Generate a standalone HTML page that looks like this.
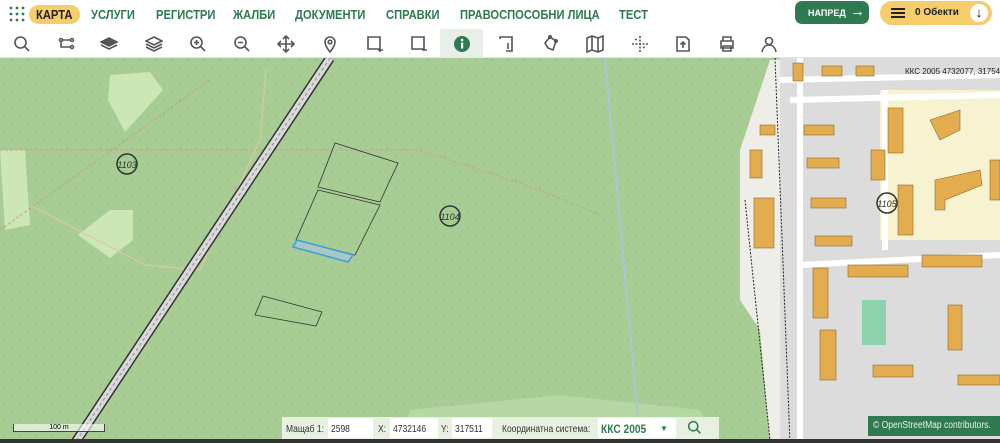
<!DOCTYPE html>
<html><head><meta charset="utf-8"><style>
*{margin:0;padding:0;box-sizing:border-box}
body{width:1000px;height:443px;overflow:hidden;font-family:"Liberation Sans",sans-serif;background:#a7cc94;position:relative}
.nav{position:absolute;left:0;top:0;width:1000px;height:29px;background:#fff}
.nav span{position:absolute;top:7px;font-weight:bold;font-size:13px;color:#2f7a50;white-space:nowrap;transform:scaleX(.86);transform-origin:left}
.tb{position:absolute;left:0;top:29px;width:1000px;height:29px;background:#fff;border-bottom:1px solid #e3e3e3}
.tb svg{position:absolute;top:6px;width:18px;height:18px;fill:none;stroke:#555;stroke-width:1.6}
.map{position:absolute;left:0;top:58px}
.bar{position:absolute;top:417px;height:22px;background:#e8f1e1;font-size:10px;color:#333}
.t{position:absolute;top:424px;font-size:10px;color:#333;white-space:nowrap;transform:scaleX(.85);transform-origin:left}
.f{position:absolute;top:418px;height:20px;background:#fff}
</style></head><body>
<svg class="map" width="1000" height="385" viewBox="0 58 1000 385">
<defs><pattern id="d" width="16" height="16" patternUnits="userSpaceOnUse"><circle cx="4" cy="4" r="0.9" fill="#95bd85"/><circle cx="12" cy="12" r="0.9" fill="#95bd85"/></pattern></defs>
<rect x="0" y="58" width="1000" height="385" fill="#a7cc94"/>
<rect x="0" y="58" width="1000" height="385" fill="url(#d)"/>
<path d="M110 75 L150 72 L163 90 L125 132 L108 100Z" fill="#cde6b6"/>
<path d="M0 150 L25 150 L30 225 L5 230Z" fill="#cde6b6"/>
<path d="M78 235 L110 210 L133 210 L133 240 L110 258Z" fill="#cde6b6"/>
<path d="M410 410 L560 395 L700 410 L720 443 L400 443Z" fill="#b7d8a5"/>
<path d="M0 150 L420 150 L540 190 L600 215" stroke="#c4a27f" stroke-width="1" stroke-dasharray="3 2" fill="none"/>
<path d="M0 230 L210 80" stroke="#c4a27f" stroke-width="1" stroke-dasharray="3 2" fill="none"/>
<path d="M266 70 L260 140 L200 270 L145 265 L30 205" stroke="#d7cba0" stroke-width="1.2" fill="none"/>
<path d="M330 58 L75 443" stroke="#333" stroke-width="10" fill="none"/>
<path d="M330 58 L75 443" stroke="#d9d9d9" stroke-width="7" fill="none"/>
<path d="M330 58 L75 443" stroke="#888" stroke-width="1" stroke-dasharray="3 3" fill="none"/>
<path d="M605 58 L640 440" stroke="#a8c8d8" stroke-width="2" fill="none"/>
<path d="M335 143 L398 163 L380 202 L318 187Z M318 190 L380 205 L355 255 L296 240Z M263 296 L322 312 L316 326 L255 315Z" stroke="#333" stroke-width="0.8" fill="none"/>
<path d="M297 240 L353 255 L348 262 L293 247Z" stroke="#3aa0d8" stroke-width="1.5" fill="#a9c7c4"/>
<circle cx="127" cy="164" r="10" fill="none" stroke="#333" stroke-width="1.5"/><text x="127" y="168" font-size="9" text-anchor="middle" font-style="italic" fill="#333">1103</text>
<circle cx="450" cy="216" r="10" fill="none" stroke="#333" stroke-width="1.5"/><text x="450" y="220" font-size="9" text-anchor="middle" font-style="italic" fill="#333">1104</text>
<path d="M740 150 L770 60 L800 58 L800 443 L770 443 L760 330 L740 300Z" fill="#efede8"/>
<rect x="780" y="58" width="220" height="385" fill="#dcdcdc"/>
<rect x="880" y="90" width="120" height="150" fill="#f7f3d0"/>
<path d="M780 80 L1000 75 M790 100 L1000 95 M800 58 L800 443 M885 90 L885 250 M800 265 L1000 255" stroke="#fff" stroke-width="6" fill="none"/>
<rect x="862" y="300" width="24" height="45" fill="#8fd3ae"/>
<g fill="#e3ad4f" stroke="#8a6a2a" stroke-width=".6">
<rect x="793" y="63" width="10" height="18"/><rect x="822" y="66" width="20" height="10"/><rect x="856" y="66" width="18" height="10"/>
<rect x="804" y="125" width="30" height="10"/><rect x="807" y="158" width="32" height="10"/><rect x="811" y="198" width="35" height="10"/><rect x="815" y="236" width="37" height="10"/>
<rect x="871" y="150" width="14" height="30"/><rect x="888" y="108" width="15" height="45"/><rect x="898" y="185" width="15" height="50"/>
<rect x="750" y="150" width="12" height="28"/><rect x="754" y="198" width="20" height="50"/><rect x="760" y="125" width="15" height="10"/>
<rect x="813" y="268" width="15" height="50"/><rect x="848" y="265" width="60" height="12"/><rect x="922" y="255" width="60" height="12"/>
<rect x="820" y="330" width="16" height="50"/><rect x="948" y="305" width="14" height="45"/><rect x="873" y="365" width="40" height="12"/>
<path d="M930 120 L960 110 L960 130 L940 140Z"/><path d="M935 180 L980 170 L982 185 L945 200 L945 210 L935 210Z"/>
<rect x="958" y="375" width="42" height="10"/><rect x="990" y="160" width="10" height="40"/>
</g>
<circle cx="887" cy="203" r="10" fill="none" stroke="#333" stroke-width="1.5"/><text x="887" y="207" font-size="9" text-anchor="middle" font-style="italic" fill="#333">1105</text>
<text x="905" y="74" font-size="8" fill="#222">ККС 2005 4732077, 317546</text>
<path d="M775 58 L790 443 M745 200 L770 440" stroke="#222" stroke-width="1" stroke-dasharray="2 1.5" fill="none"/>
<rect x="0" y="439" width="1000" height="4" fill="#333"/>
</svg>
<div class="nav">
<svg style="position:absolute;left:9px;top:6px" width="16" height="16"><g fill="#2f7a50"><circle cx="2" cy="2" r="1.4"/><circle cx="8" cy="2" r="1.4"/><circle cx="14" cy="2" r="1.4"/><circle cx="2" cy="8" r="1.4"/><circle cx="8" cy="8" r="1.4"/><circle cx="14" cy="8" r="1.4"/><circle cx="2" cy="14" r="1.4"/><circle cx="8" cy="14" r="1.4"/><circle cx="14" cy="14" r="1.4"/></g></svg>
<div style="position:absolute;left:29px;top:5px;width:51px;height:19px;border-radius:10px;background:#f5cd6a"></div>
<span style="left:36px;color:#222">КАРТА</span>
<span style="left:91px">УСЛУГИ</span><span style="left:156px">РЕГИСТРИ</span><span style="left:233px">ЖАЛБИ</span><span style="left:295px">ДОКУМЕНТИ</span><span style="left:386px">СПРАВКИ</span><span style="left:460px">ПРАВОСПОСОБНИ ЛИЦА</span><span style="left:619px">ТЕСТ</span>
<div style="position:absolute;left:795px;top:1px;width:74px;height:23px;border-radius:7px;background:#2f7a50"></div>
<div style="position:absolute;left:808px;top:8px;font-size:9px;font-weight:bold;color:#fff;white-space:nowrap">НАПРЕД</div>
<div style="position:absolute;left:850px;top:3px;font-size:15px;font-weight:bold;color:#fff">→</div>
<div style="position:absolute;left:880px;top:1px;width:112px;height:24px;border-radius:12px;background:#f5cd6a"></div>
<div style="position:absolute;left:891px;top:8px;width:14px;height:2px;background:#222;box-shadow:0 4px #222,0 8px #222"></div>
<span style="left:915px;top:7px;font-size:10px;color:#222;transform:none">0 Обекти</span>
<div style="position:absolute;left:970px;top:4px;width:18px;height:18px;border-radius:9px;background:#fff;text-align:center;font-size:13px;font-weight:bold;line-height:18px">↓</div>
</div>
<div class="tb">
<div style="position:absolute;left:440px;top:0;width:43px;height:29px;background:#e8efe9"></div>
<svg style="left:13px" viewBox="0 0 18 18"><circle cx="7.5" cy="7.5" r="5.5"/><path d="M11.5 11.5L16 16"/></svg>
<svg style="left:58px" viewBox="0 0 18 18"><circle cx="3" cy="5" r="1.5"/><circle cx="14" cy="5" r="1.5"/><circle cx="14" cy="12" r="1.5"/><path d="M5 5h7M3 7v5h9"/></svg>
<svg style="left:100px" viewBox="0 0 18 18"><path d="M9 3L17 7 9 11 1 7Z" fill="#555"/><path d="M1 10l8 4 8-4"/></svg>
<svg style="left:145px" viewBox="0 0 18 18"><path d="M9 2L17 6 9 10 1 6Z M1 9l8 4 8-4 M1 12l8 4 8-4"/></svg>
<svg style="left:189px" viewBox="0 0 18 18"><circle cx="7.5" cy="7.5" r="5.5"/><path d="M11.5 11.5L16 16M5 7.5h5M7.5 5v5"/></svg>
<svg style="left:233px" viewBox="0 0 18 18"><circle cx="7.5" cy="7.5" r="5.5"/><path d="M11.5 11.5L16 16M5 7.5h5"/></svg>
<svg style="left:277px" viewBox="0 0 18 18"><path d="M9 1v16M1 9h16M6 4l3-3 3 3M6 14l3 3 3-3M4 6L1 9l3 3M14 6l3 3-3 3"/></svg>
<svg style="left:321px" viewBox="0 0 18 18"><path d="M9 17C5 12 4 9 4 7a5 5 0 0 1 10 0c0 2-1 5-5 10Z"/><circle cx="9" cy="7" r="1.8"/></svg>
<svg style="left:366px" viewBox="0 0 18 18"><path d="M2 2h12v12H2Z M14 12v5M12 15h5"/></svg>
<svg style="left:410px" viewBox="0 0 18 18"><path d="M2 2h12v12H2Z M12 15h5"/></svg>
<svg style="left:453px;stroke:none" viewBox="0 0 18 18"><circle cx="9" cy="9" r="8" fill="#2f7a50"/><rect x="8" y="7.5" width="2.2" height="6" fill="#fff"/><circle cx="9.1" cy="5" r="1.3" fill="#fff"/></svg>
<svg style="left:498px" viewBox="0 0 18 18"><path d="M2 4V2h12v14H8M10 8v6"/></svg>
<svg style="left:542px" viewBox="0 0 18 18"><path d="M3 8L8 2l6 4-3 9-5-2Z"/><circle cx="8" cy="2" r="1.2"/><circle cx="14" cy="6" r="1.2"/></svg>
<svg style="left:586px" viewBox="0 0 18 18"><path d="M1 3l5-2 6 2 5-2v14l-5 2-6-2-5 2Z M6 1v14M12 3v14"/></svg>
<svg style="left:631px" viewBox="0 0 18 18"><path d="M9 1v16M1 9h16M4 5l3-2M12 13l3-2" stroke-dasharray="2 1.5"/></svg>
<svg style="left:674px" viewBox="0 0 18 18"><path d="M3 2h9l3 3v11H3Z M9 13V7M6.5 9.5L9 7l2.5 2.5"/></svg>
<svg style="left:718px" viewBox="0 0 18 18"><path d="M5 6V2h8v4M3 6h12v7H3ZM5 11h8v5H5Z"/></svg>
<svg style="left:760px" viewBox="0 0 18 18"><circle cx="9" cy="6" r="3.5"/><path d="M2 17c1-5 4-7 7-7s6 2 7 7"/></svg>
</div>
<div style="position:absolute;left:13px;top:424px;width:92px;height:8px;border:1px solid #444;border-top:none;background:rgba(255,255,255,.6);font-size:7px;text-align:center;line-height:7px">100 m</div>
<div class="bar" style="left:282px;width:437px"></div>
<div class="f" style="left:328px;width:45px"></div><div class="f" style="left:390px;width:48px"></div><div class="f" style="left:452px;width:40px"></div><div class="f" style="left:598px;width:78px"></div>
<div class="t" style="left:286px">Мащаб 1:</div>
<div class="t" style="left:331px">2598</div>
<div class="t" style="left:378px">X:</div>
<div class="t" style="left:393px">4732146</div>
<div class="t" style="left:441px">Y:</div>
<div class="t" style="left:455px">317511</div>
<div class="t" style="left:502px">Координатна система:</div>
<div class="t" style="left:601px;top:422px;font-size:12px;font-weight:bold;color:#2f7a50">ККС 2005</div>
<div style="position:absolute;left:660px;top:424px;font-size:8px;color:#2f7a50">▼</div>
<svg style="position:absolute;left:687px;top:420px" width="15" height="15" viewBox="0 0 18 18" fill="none" stroke="#2f7a50" stroke-width="1.8"><circle cx="7.5" cy="7.5" r="5.5"/><path d="M11.5 11.5L16 16"/></svg>
<div style="position:absolute;left:868px;top:416px;width:132px;height:20px;background:#2f7a50"></div>
<div class="t" style="left:873px;top:420px;color:#e8f3ea">© OpenStreetMap contributors.</div>
</body></html>
